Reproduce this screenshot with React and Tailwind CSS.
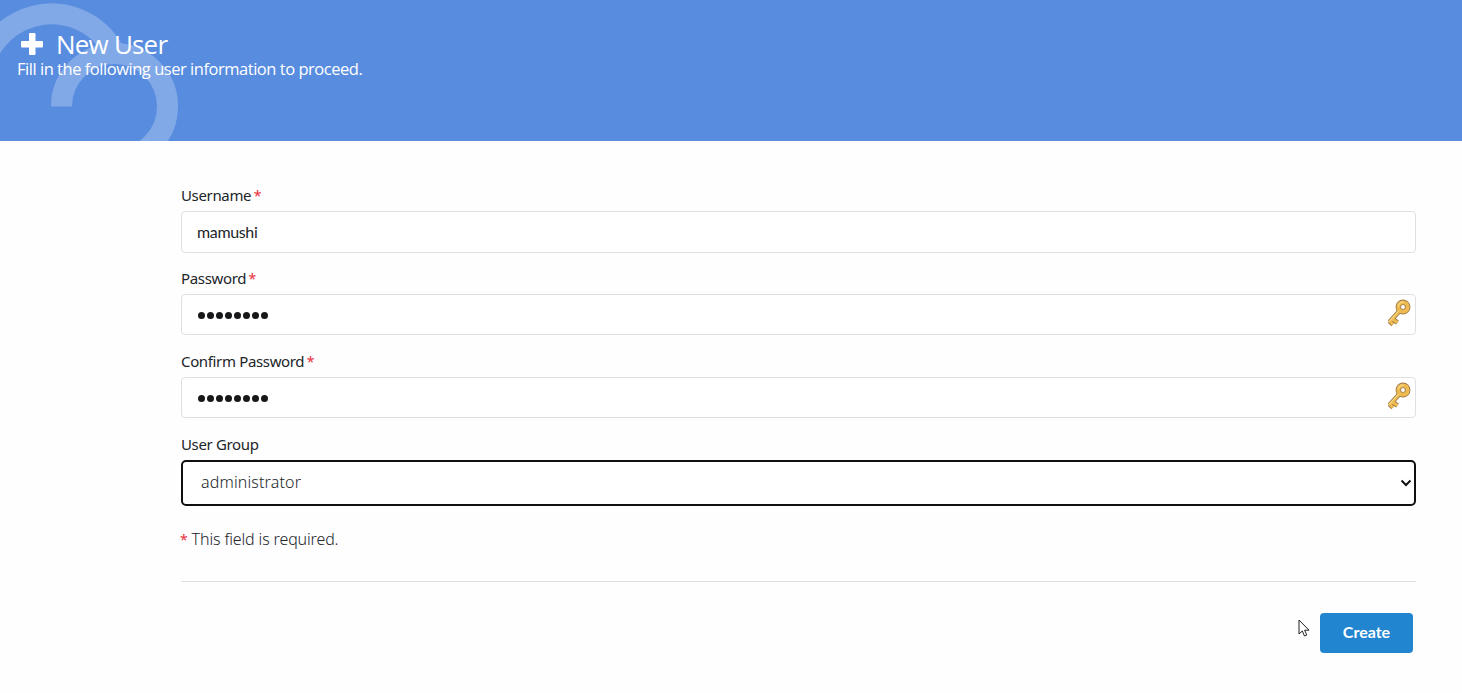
const Required = () => <span className="-ml-px text-[14px] font-normal text-[#e8303a]">*</span>;

function HeaderRings() {
  return (
    <svg className="absolute top-0 left-0" width="190" height="141" viewBox="0 0 190 141" fill="none">
      <g stroke="#fff" strokeWidth="21" opacity="0.25">
        <path d="M-19 84.500A70.500 70.500 0 0 1 112.500 49" />
        <path d="M61.500 106.500A53 53 0 1 1 114.500 159.500" />
      </g>
    </svg>
  );
}

function PlusIcon() {
  return (
    <svg className="mr-[13px] ml-1" width="22" height="22" viewBox="0 0 22 22" fill="#fff">
      <rect x="8" width="6.500" height="22" rx="1" />
      <rect y="8" width="22" height="6.500" rx="1" />
    </svg>
  );
}

function KeyIcon() {
  return (
    <svg className="mb-[3px]" width="25" height="28" viewBox="0 0 25 28" fill="none">
      <g stroke="#a07a4c" strokeLinejoin="round">
        <circle cx="17" cy="8" r="4.700" strokeWidth="5.500" />
        <path d="M13.500 12L3.500 23M7 20.500l4.500 3M3.500 22l3.500 3.500" strokeWidth="4.800" />
      </g>
      <g stroke="#edbb50" strokeLinejoin="round">
        <circle cx="17" cy="8" r="4.700" strokeWidth="3.800" />
        <path d="M14 11.500L3.500 23M7 20.500l4.500 3M3.500 22l3.500 3.500" strokeWidth="3" />
      </g>
      <path d="M12.500 12L3.500 22M12.500 7a4.700 4.700 0 0 1 5-3.800" stroke="#fce59c" />
    </svg>
  );
}

function Label({ children, required }) {
  return (
    <label className="block h-[19px] text-[15px] leading-[19px] tracking-[-0.35px] whitespace-pre">
      {children} {required && <Required />}
    </label>
  );
}

function PasswordField({ label }) {
  return (
    <div className="h-[83px]">
      <Label required>{label}</Label>
      <div className="mt-[6px] flex h-[41px] items-center justify-between rounded-[4px] border border-[#dfe0e1] bg-white pr-1 pl-4">
        <div className="flex gap-[2px] pt-[2px]">
          {Array.from({ length: 8 }, (_, i) => (
            <span key={i} className="size-[7px] rounded-full bg-[#17181a]" />
          ))}
        </div>
        <KeyIcon />
      </div>
    </div>
  );
}

export default function App() {
  return (
    <div className="relative h-[693px] w-full overflow-hidden bg-[#fefefe] font-['Noto_Sans',sans-serif] text-[#212529]">
      <header className="relative h-[141px] bg-[#588cdf] text-white">
        <HeaderRings />
        <div className="relative pt-[29px] pl-[17px] font-['Open_Sans',sans-serif]">
          <h1 className="flex h-[30px] items-center text-[26px] leading-[30px] tracking-[-0.8px]">
            <PlusIcon />
            New User
          </h1>
          <p className="text-[16.5px] leading-5 tracking-[-0.47px]">
            Fill in the following user information to proceed.
          </p>
        </div>
      </header>

      <main className="mr-[46px] ml-[181px] pt-[45px]">
        <div className="h-[82.5px]">
          <Label required>Username</Label>
          <div className="mt-[6px] flex h-[42px] items-center rounded-[4px] border border-[#dfe0e1] bg-white pl-[15px] font-['Lato',sans-serif] text-[16px] tracking-[-0.35px]">
            mamushi
          </div>
        </div>
        <PasswordField label="Password" />
        <PasswordField label="Confirm Password" />
        <Label>User Group</Label>
        <div className="mt-[6px] flex h-[46px] items-center justify-between rounded-[5px] border-2 border-[#101010] bg-white pr-[2px] pl-[18px] text-[16px] font-light tracking-[0.15px]">
          <span className="pb-[1px]">administrator</span>
          <svg width="12" height="8" viewBox="0 0 12 8" fill="none">
            <path d="M1.500 1.500L6 6l4.500-4.500" stroke="#111" strokeWidth="2" />
          </svg>
        </div>
        <p className="mt-[21px] h-6 text-[16px] leading-6 font-light tracking-[-0.13px]">
          <Required /> This field is required.
        </p>
        <hr className="mt-[30px] border-[#dedede]" />
        <div className="mt-[31px] mr-[3px] flex justify-end">
          <button className="h-10 w-[93px] rounded-[4px] bg-[#2185d0] pb-px font-['Lato',sans-serif] text-[16px] font-bold text-white">
            Create
          </button>
        </div>
      </main>

      <svg className="absolute top-[619px] left-[1298px]" width="12" height="19" viewBox="0 0 12 19">
        <path d="M1 1v14l3.300-3 2.200 5 2.300-1-2.200-4.800H11z" fill="#fff" stroke="#222" />
      </svg>
    </div>
  );
}
